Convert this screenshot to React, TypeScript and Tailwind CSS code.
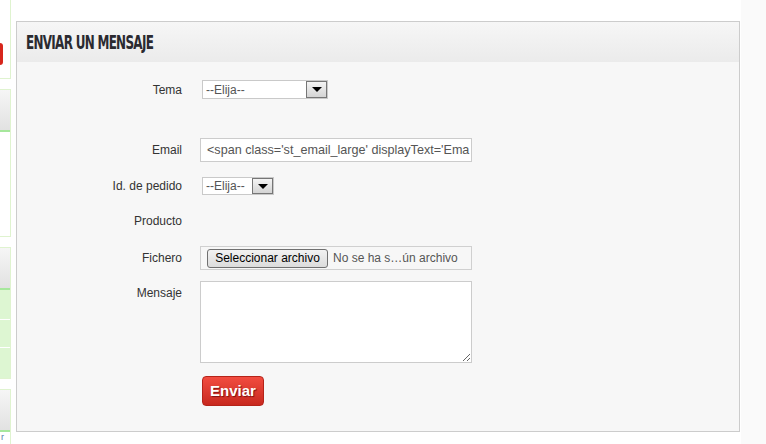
import React from "react";

const font = { fontFamily: '"Liberation Sans", Arial, sans-serif' };

function FakeSelect({ width }: { width: string }) {
  return (
    <div className={`${width} ml-[2px] h-full flex items-center justify-between border border-[#c9c9c9] bg-white`}>
      <span className="pl-[3px] text-[12px] text-[#555]">--Elija--</span>
      <span className="h-full w-[21px] flex items-center justify-center border border-[#767676] bg-gradient-to-b from-[#f4f4f4] to-[#d4d4d4]">
        <span className="w-0 h-0 border-l-[5px] border-r-[5px] border-t-[5px] border-l-transparent border-r-transparent border-t-black" />
      </span>
    </div>
  );
}

function Row({
  label,
  className,
  top,
  children,
}: {
  label: string;
  className: string;
  top?: boolean;
  children?: React.ReactNode;
}) {
  return (
    <div className={`flex ${className}`}>
      <div
        className={`w-[165px] shrink-0 text-right text-[12px] leading-[14px] text-[#333] ${
          top ? "pt-[5px]" : "self-center"
        }`}
      >
        {label}
      </div>
      <div className="ml-[18px] h-full flex">{children}</div>
    </div>
  );
}

export default function App() {
  return (
    <div className="flex h-[444px] w-[766px] overflow-hidden bg-white" style={font}>
      {/* Left sidebar (cut off) */}
      <div className="w-[11px] shrink-0 flex flex-col">
        <div className="h-[79px] border-r border-b border-[#dff3cf] bg-white flex flex-col">
          <div className="mt-[43px] h-[22px] w-[3px] rounded-r-[3px] bg-[#d7261c]" />
        </div>
        <div className="mt-[10px] h-[148px] border-r border-t border-b border-[#dff3cf] flex flex-col">
          <div className="h-[42px] bg-gradient-to-b from-[#f6f6f6] to-[#e2e2e2] border-b-2 border-[#a6e79c]" />
          <div className="flex-1 bg-white" />
        </div>
        <div className="mt-[10px] h-[132px] border-r border-t border-b border-[#dff3cf] flex flex-col">
          <div className="h-[42px] bg-gradient-to-b from-[#f6f6f6] to-[#e2e2e2] border-b-2 border-[#a6e79c]" />
          <div className="h-[30px] bg-[#ddf6d2] border-b border-white" />
          <div className="h-[28px] bg-[#ddf6d2] border-b border-white" />
          <div className="flex-1 bg-[#ddf6d2]" />
        </div>
        <div className="mt-[10px] flex-1 border-r border-t border-[#dff3cf] flex flex-col">
          <div className="h-[42px] shrink-0 bg-gradient-to-b from-[#f6f6f6] to-[#e2e2e2] border-b-2 border-[#a6e79c]" />
          <div className="flex-1 bg-white text-[9px] leading-[10px] text-[#5b7fa8] pl-[1px]">r</div>
        </div>
      </div>

      {/* Main panel */}
      <div className="ml-[5px] mt-[21px] w-[724px] h-[411px] shrink-0 border border-[#cccccc] bg-[#f7f7f7] flex flex-col">
        <div className="h-[40px] shrink-0 flex items-center pl-[9px] bg-gradient-to-b from-[#f6f6f6] to-[#ebebeb]">
          <h2
            className="text-[19px] font-bold text-[#2a2a30] tracking-[-1px] origin-left scale-x-[0.7] whitespace-nowrap"
            style={{ fontFamily: '"Liberation Sans Narrow", "DejaVu Sans Condensed", "Liberation Sans", sans-serif' }}
          >
            ENVIAR UN MENSAJE
          </h2>
        </div>

        <div className="flex flex-col pt-[18px]">
          <Row label="Tema" className="h-[19px]">
            <FakeSelect width="w-[126px]" />
          </Row>

          <Row label="Email" className="mt-[39px] h-[24px]">
            <div className="w-[272px] h-full border border-[#cccccc] bg-white flex items-center pl-[6px] overflow-hidden whitespace-nowrap text-[12.6px] text-[#555]">
              {"<span class='st_email_large' displayText='Ema"}
            </div>
          </Row>

          <Row label="Id. de pedido" className="mt-[15px] h-[18px]">
            <FakeSelect width="w-[72px]" />
          </Row>

          <Row label="Producto" className="mt-[17px] h-[18px]" />

          <Row label="Fichero" className="mt-[16px] h-[24px]">
            <div className="w-[272px] h-full border border-[#d0d0d0] flex items-center pl-[6px] gap-[5px] whitespace-nowrap">
              <button className="h-[19px] w-[121px] rounded-[3px] border border-[#707070] bg-gradient-to-b from-[#f2f2f2] to-[#dcdcdc] text-[12px] text-black leading-none">
                Seleccionar archivo
              </button>
              <span className="text-[12px] text-[#555]">No se ha s…ún archivo</span>
            </div>
          </Row>

          <Row label="Mensaje" className="mt-[11px] h-[82px]" top>
            <textarea className="w-[272px] h-[82px] border border-[#cccccc] bg-white outline-none" />
          </Row>

          <Row label="" className="mt-[13px] h-[30px]">
            <button className="ml-[2px] w-[62px] h-[30px] rounded-[4px] border border-[#b52319] bg-gradient-to-b from-[#f24c40] to-[#c8281e] text-white font-bold text-[15px] [text-shadow:1px_1px_1px_#7d1212]">
              Enviar
            </button>
          </Row>
        </div>
      </div>

      {/* Right gutter */}
      <div className="ml-[1px] flex-1 bg-[#fafafa]" />
    </div>
  );
}
